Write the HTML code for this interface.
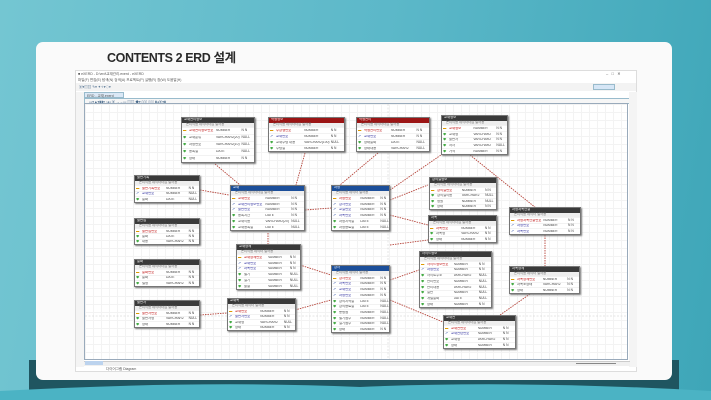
<!DOCTYPE html>
<html><head><meta charset="utf-8"><style>
*{margin:0;padding:0;box-sizing:border-box}
body{width:711px;height:400px;overflow:hidden;position:relative;font-family:"Liberation Sans","Noto Sans CJK KR",sans-serif;background:linear-gradient(100deg,#74c6d2 0%,#5cb8c9 50%,#3ea6b8 100%)}
.band{position:absolute;left:29px;top:360px;width:650px;height:40px;background:#1f5560}
.wave{position:absolute;left:0;top:382px;width:711px;height:18px}
.card{position:absolute;left:36px;top:42px;width:636px;height:338px;background:#fafafa;border-radius:7px}
.title{position:absolute;left:107px;top:47px;font-size:12.5px;font-weight:bold;color:#2a2a2a;letter-spacing:-0.4px}
.shot{position:absolute;left:75px;top:70px;width:562px;height:302px;background:#fff;border:1px solid #ddd}
.tb{position:absolute;font-size:3.5px;color:#555;white-space:nowrap}
.canvas{position:absolute;left:84px;top:103px;width:544px;height:257px;border:1px solid #9ab;background-color:#fff;background-image:linear-gradient(#f3f3f3 1px,transparent 1px),linear-gradient(90deg,#f3f3f3 1px,transparent 1px);background-size:8px 8px}
.t{position:absolute;background:#fff;border:1px solid #777;box-shadow:1px 1px 1.5px #777;display:flex;flex-direction:column;font-size:3.3px;line-height:1;overflow:hidden}
.t .h{height:5px;background:#3a3a3a;color:#fff;padding-left:2px;flex:none}
.t.r .h{background:#9b1414}.t.b .h{background:#1c4f9a}
.t .c{height:4px;flex:none;color:#666;background:#eee;display:flex;padding-left:4px}
.t .w{flex:1;display:flex;align-items:center;padding-left:1px;border-top:1px solid #f2f2f2;color:#444}
.t span{display:inline-block;overflow:hidden}
.t span:nth-child(1){width:6px;color:#4a4;font-weight:bold}
.t span:nth-child(2){width:38%}
.t span:nth-child(3){width:36%}
.pk span:nth-child(1){color:#d90}.pk span:nth-child(2){color:#b00}
.fk span:nth-child(1){color:#35a}.fk span:nth-child(2){color:#229}
</style></head><body>
<div class="band"></div>
<svg class="wave" viewBox="0 0 711 18" preserveAspectRatio="none"><path d="M0 18 L0 9 Q200 -2 360 5 Q520 -2 711 9 L711 18Z" fill="#4bb3c4"/></svg>
<div class="card"></div>
<div class="title">CONTENTS 2 ERD 설계</div>
<div class="shot">
<div class="tb" style="left:2px;top:1px">■ eXERD - D:\erd\교재관리.exerd - eXERD</div>
<div class="tb" style="left:530px;top:0px;font-size:4px">–&nbsp;&nbsp;&nbsp;□&nbsp;&nbsp;&nbsp;✕</div>
<div class="tb" style="left:2px;top:7px">파일(F) 편집(E) 탐색(N) 검색(A) 프로젝트(P) 실행(R) 창(W) 도움말(H)</div>
<div style="position:absolute;left:0;top:12px;width:560px;height:8px;background:#f3f3f3"></div>
<div class="tb" style="left:3px;top:14px;color:#468">▣▾▤▥ ✎▾ ✦✧▾◇▾</div>
<div style="position:absolute;left:517px;top:13px;width:22px;height:6px;background:#d6e6f6;border:1px solid #9bc"></div>
<div style="position:absolute;left:8px;top:21px;width:40px;height:6px;background:#dbe8f6;border:1px solid #9bc"><span class="tb" style="left:2px;top:1px">ERD - 교재.exerd</span></div>
<div style="position:absolute;left:8px;top:27px;width:546px;height:6px;background:#f6f6f6;border:1px solid #9bc"><span class="tb" style="left:4px;top:1px;color:#468">▭▾▲▾▮▮▾ ▫◂◃ ▣ →→▭ ▤▤ ◆▾ ▯▯▯ ▯▯▯ ▮◂▣▾▮</span></div>
<div style="position:absolute;left:0;top:21px;width:8px;height:275px;background:#f4f4f4"></div>
<div style="position:absolute;left:553px;top:21px;width:8px;height:275px;background:#f4f4f4"></div>
<div style="position:absolute;left:8px;top:290px;width:546px;height:5px;background:#f0f0f0;border-top:1px solid #ccc"></div>
<div style="position:absolute;left:9px;top:290px;width:18px;height:4px;background:#bcd3ee"></div>
<div style="position:absolute;left:500px;top:292px;width:40px;height:1px;background:#888"></div>
<div class="tb" style="left:30px;top:296px">다이어그램 Diagram</div>
</div>
<div class="canvas"></div>
<svg style="position:absolute;left:0;top:0" width="711" height="400">
<g stroke="#ccc" stroke-width="0.5" stroke-dasharray="2,1.5"><path d="M85 316 L627 316"/><path d="M388 104 L388 359"/></g>
<g stroke="#b5443a" stroke-width="0.9" stroke-dasharray="1.5,1" fill="none">
<path d="M215 164 L240 185"/><path d="M305 153 L296 185"/><path d="M378 153 L340 185"/><path d="M200 190 L229 195"/><path d="M305 210 L331 208"/><path d="M390 190 L441 155"/><path d="M390 200 L428 185"/><path d="M390 215 L428 225"/><path d="M268 233 L268 245"/><path d="M200 315 L227 313"/><path d="M295 310 L331 300"/><path d="M390 280 L419 270"/><path d="M390 300 L443 322"/><path d="M470 155 L536 208"/><path d="M545 235 L545 266"/><path d="M530 294 L500 315"/><path d="M390 245 L428 240"/><path d="M300 265 L331 275"/></g></svg>

<div class="t" style="left:181px;top:117px;width:74px;height:46px"><div class="h">교재관리정보</div><div class="c">논리이름 데이터타입 널허용</div><div class="w pk"><span>▬</span><span>교재관리정보번호</span><span>NUMBER</span>N N</div><div class="w"><span>◆</span><span>교재분류</span><span>VARCHAR2(20)</span>NULL</div><div class="w"><span>◆</span><span>과정번호</span><span>VARCHAR2(10)</span>NULL</div><div class="w"><span>◆</span><span>등록일</span><span>DATE</span>NULL</div><div class="w"><span>◆</span><span>상태</span><span>NUMBER</span>N N</div></div>
<div class="t r" style="left:268px;top:117px;width:77px;height:35px"><div class="h">학생정보</div><div class="c">논리이름 데이터타입 널허용</div><div class="w pk"><span>▬</span><span>수강생번호</span><span>NUMBER</span>N N</div><div class="w fk"><span>↗</span><span>교재번호</span><span>NUMBER</span>N N</div><div class="w"><span>◆</span><span>교재수령 내용</span><span>VARCHAR2(100)</span>NULL</div><div class="w"><span>◆</span><span>수령일</span><span>NUMBER</span>N N</div></div>
<div class="t r" style="left:356px;top:117px;width:74px;height:35px"><div class="h">학생관리</div><div class="c">논리이름 데이터타입 널허용</div><div class="w pk"><span>▬</span><span>학생관리번호</span><span>NUMBER</span>N N</div><div class="w fk"><span>↗</span><span>교재번호</span><span>NUMBER</span>N N</div><div class="w"><span>◆</span><span>상태날짜</span><span>DATE</span>NULL</div><div class="w"><span>◆</span><span>상태내용</span><span>VARCHAR2</span>NULL</div></div>
<div class="t" style="left:441px;top:115px;width:67px;height:40px"><div class="h">교재정보</div><div class="c">논리이름 데이터타입 널허용</div><div class="w pk"><span>▬</span><span>교재정보</span><span>NUMBER</span>N N</div><div class="w"><span>◆</span><span>교재명</span><span>VARCHAR2</span>N N</div><div class="w"><span>◆</span><span>출판사</span><span>VARCHAR2</span>N N</div><div class="w"><span>◆</span><span>저자</span><span>VARCHAR2</span>NULL</div><div class="w"><span>◆</span><span>가격</span><span>NUMBER</span>N N</div></div>
<div class="t" style="left:134px;top:175px;width:66px;height:28px"><div class="h">출판기록</div><div class="c">논리이름 데이터타입 널허용</div><div class="w pk"><span>▬</span><span>출판기록번호</span><span>NUMBER</span>N N</div><div class="w fk"><span>↗</span><span>교재번호</span><span>NUMBER</span>NULL</div><div class="w"><span>◆</span><span>날짜</span><span>DATE</span>NULL</div></div>
<div class="t b" style="left:230px;top:185px;width:75px;height:46px"><div class="h">교재</div><div class="c">논리이름 데이터타입 널허용</div><div class="w pk"><span>▬</span><span>교재번호</span><span>NUMBER</span>N N</div><div class="w fk"><span>↗</span><span>교재관리정보번호</span><span>NUMBER</span>N N</div><div class="w fk"><span>↗</span><span>출판번호</span><span>NUMBER</span>N N</div><div class="w"><span>◆</span><span>등록시간</span><span>DATE</span>N N</div><div class="w"><span>◆</span><span>교재이름</span><span>VARCHAR2(20)</span>NULL</div><div class="w"><span>◆</span><span>교재등록일</span><span>DATE</span>NULL</div></div>
<div class="t b" style="left:331px;top:185px;width:59px;height:46px"><div class="h">과정</div><div class="c">논리이름 데이터 널허용</div><div class="w pk"><span>▬</span><span>과정번호</span><span>NUMBER</span>N N</div><div class="w fk"><span>↗</span><span>강사번호</span><span>NUMBER</span>N N</div><div class="w fk"><span>↗</span><span>교실번호</span><span>NUMBER</span>N N</div><div class="w fk"><span>↗</span><span>과목번호</span><span>NUMBER</span>N N</div><div class="w"><span>◆</span><span>과정시작일</span><span>DATE</span>NULL</div><div class="w"><span>◆</span><span>과정종료일</span><span>DATE</span>NULL</div></div>
<div class="t" style="left:429px;top:177px;width:68px;height:33px"><div class="h">강의실정보</div><div class="c">논리이름 데이터타입 널허용</div><div class="w pk"><span>▬</span><span>강의실번호</span><span>NUMBER</span>N N</div><div class="w"><span>◆</span><span>강의실이름</span><span>VARCHAR2</span>NULL</div><div class="w"><span>◆</span><span>정원</span><span>NUMBER</span>NULL</div><div class="w"><span>◆</span><span>상태</span><span>NUMBER</span>N N</div></div>
<div class="t" style="left:134px;top:218px;width:66px;height:27px"><div class="h">출판업</div><div class="c">논리이름 데이터타입 널허용</div><div class="w pk"><span>▬</span><span>출판업번호</span><span>NUMBER</span>N N</div><div class="w"><span>◆</span><span>날짜</span><span>DATE</span>N N</div><div class="w"><span>◆</span><span>내용</span><span>VARCHAR2</span>N N</div></div>
<div class="t" style="left:428px;top:215px;width:69px;height:28px"><div class="h">과목</div><div class="c">논리이름 데이터타입 널허용</div><div class="w pk"><span>▬</span><span>과목번호</span><span>NUMBER</span>N N</div><div class="w"><span>◆</span><span>과목명</span><span>VARCHAR2</span>N N</div><div class="w"><span>◆</span><span>상태</span><span>NUMBER</span>N N</div></div>
<div class="t" style="left:509px;top:207px;width:72px;height:28px"><div class="h">과정과목연결</div><div class="c">논리이름 데이터 널허용</div><div class="w pk"><span>▬</span><span>과정과목연결번호</span><span>NUMBER</span>N N</div><div class="w fk"><span>↗</span><span>과정번호</span><span>NUMBER</span>N N</div><div class="w fk"><span>↗</span><span>과목번호</span><span>NUMBER</span>N N</div></div>
<div class="t" style="left:236px;top:244px;width:65px;height:46px"><div class="h">교재상세</div><div class="c">논리이름 데이터 널허용</div><div class="w pk"><span>▬</span><span>교재상세번호</span><span>NUMBER</span>N N</div><div class="w fk"><span>↗</span><span>교재번호</span><span>NUMBER</span>N N</div><div class="w fk"><span>↗</span><span>과목번호</span><span>NUMBER</span>N N</div><div class="w"><span>◆</span><span>필기</span><span>NUMBER</span>NULL</div><div class="w"><span>◆</span><span>실기</span><span>NUMBER</span>NULL</div><div class="w"><span>◆</span><span>출결</span><span>NUMBER</span>NULL</div></div>
<div class="t" style="left:134px;top:259px;width:66px;height:28px"><div class="h">날짜</div><div class="c">논리이름 데이터타입 널허용</div><div class="w pk"><span>▬</span><span>날짜번호</span><span>NUMBER</span>N N</div><div class="w"><span>◆</span><span>날짜</span><span>DATE</span>N N</div><div class="w"><span>◆</span><span>설명</span><span>VARCHAR2</span>N N</div></div>
<div class="t b" style="left:331px;top:265px;width:59px;height:68px"><div class="h">강사</div><div class="c">논리이름 데이터 널허용</div><div class="w pk"><span>▬</span><span>강사번호</span><span>NUMBER</span>N N</div><div class="w fk"><span>↗</span><span>과목번호</span><span>NUMBER</span>N N</div><div class="w fk"><span>↗</span><span>교재번호</span><span>NUMBER</span>N N</div><div class="w fk"><span>↗</span><span>과정번호</span><span>NUMBER</span>N N</div><div class="w"><span>◆</span><span>강의시작일</span><span>DATE</span>NULL</div><div class="w"><span>◆</span><span>강의종료일</span><span>DATE</span>NULL</div><div class="w"><span>◆</span><span>총평점</span><span>NUMBER</span>NULL</div><div class="w"><span>◆</span><span>필기점수</span><span>NUMBER</span>NULL</div><div class="w"><span>◆</span><span>실기점수</span><span>NUMBER</span>NULL</div><div class="w"><span>◆</span><span>상태</span><span>NUMBER</span>N N</div></div>
<div class="t" style="left:419px;top:251px;width:73px;height:57px"><div class="h">사이드정보</div><div class="c">논리이름 데이터타입 널허용</div><div class="w pk"><span>▬</span><span>사이드정보번호</span><span>NUMBER</span>N N</div><div class="w fk"><span>↗</span><span>과정번호</span><span>NUMBER</span>N N</div><div class="w"><span>◆</span><span>사이트주소</span><span>VARCHAR2</span>NULL</div><div class="w"><span>◆</span><span>관리번호</span><span>NUMBER</span>NULL</div><div class="w"><span>◆</span><span>관리내용</span><span>VARCHAR2</span>NULL</div><div class="w"><span>◆</span><span>일반</span><span>NUMBER</span>NULL</div><div class="w"><span>◆</span><span>개설날짜</span><span>DATE</span>NULL</div><div class="w"><span>◆</span><span>상태</span><span>NUMBER</span>N N</div></div>
<div class="t" style="left:509px;top:266px;width:71px;height:28px"><div class="h">과목상세</div><div class="c">논리이름 데이터 널허용</div><div class="w pk"><span>▬</span><span>과목상세번호</span><span>NUMBER</span>N N</div><div class="w"><span>◆</span><span>과목조상태</span><span>VARCHAR2</span>N N</div><div class="w"><span>◆</span><span>상태</span><span>NUMBER</span>N N</div></div>
<div class="t" style="left:134px;top:300px;width:66px;height:28px"><div class="h">출판사</div><div class="c">논리이름 데이터타입 널허용</div><div class="w pk"><span>▬</span><span>출판사번호</span><span>NUMBER</span>N N</div><div class="w"><span>◆</span><span>출판사명</span><span>VARCHAR2</span>NULL</div><div class="w"><span>◆</span><span>상태</span><span>NUMBER</span>N N</div></div>
<div class="t" style="left:227px;top:298px;width:69px;height:33px"><div class="h">교재목</div><div class="c">논리이름 데이터 널허용</div><div class="w pk"><span>▬</span><span>교재번호</span><span>NUMBER</span>N N</div><div class="w fk"><span>↗</span><span>출판사번호</span><span>NUMBER</span>N N</div><div class="w"><span>◆</span><span>교재명</span><span>VARCHAR2</span>NULL</div><div class="w"><span>◆</span><span>상태</span><span>NUMBER</span>N N</div></div>
<div class="t" style="left:443px;top:315px;width:73px;height:34px"><div class="h">교재관</div><div class="c">논리이름 데이터타입 널허용</div><div class="w pk"><span>▬</span><span>교재관번호</span><span>NUMBER</span>N N</div><div class="w fk"><span>↗</span><span>교재관련번호</span><span>NUMBER</span>N N</div><div class="w"><span>◆</span><span>교재명</span><span>VARCHAR2</span>N N</div><div class="w"><span>◆</span><span>상태</span><span>NUMBER</span>N N</div></div>
</body></html>
